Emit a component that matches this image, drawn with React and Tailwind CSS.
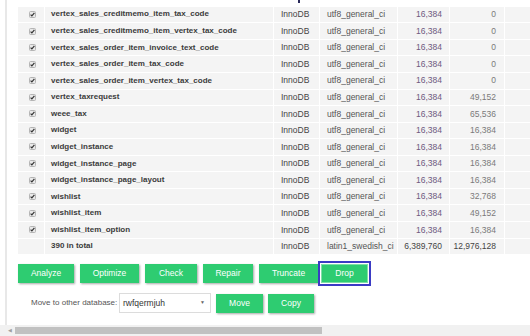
import React from 'react';

const rows = [
  ['vertex_sales_creditmemo_item_tax_code', '16,384', '0'],
  ['vertex_sales_creditmemo_item_vertex_tax_code', '16,384', '0'],
  ['vertex_sales_order_item_invoice_text_code', '16,384', '0'],
  ['vertex_sales_order_item_tax_code', '16,384', '0'],
  ['vertex_sales_order_item_vertex_tax_code', '16,384', '0'],
  ['vertex_taxrequest', '16,384', '49,152'],
  ['weee_tax', '16,384', '65,536'],
  ['widget', '16,384', '16,384'],
  ['widget_instance', '16,384', '16,384'],
  ['widget_instance_page', '16,384', '16,384'],
  ['widget_instance_page_layout', '16,384', '16,384'],
  ['wishlist', '16,384', '32,768'],
  ['wishlist_item', '16,384', '49,152'],
  ['wishlist_item_option', '16,384', '16,384'],
];

const actions = [
  ['Analyze', 'w-[56px]'],
  ['Optimize', 'w-[59px]'],
  ['Check', 'w-[52px]'],
  ['Repair', 'w-[50px]'],
  ['Truncate', 'w-[59px]'],
];

const Checkbox = () => (
  <svg width="7" height="7" viewBox="0 0 7 7">
    <rect x="0.5" y="0.5" width="6" height="6" rx="1" fill="#e9e9e9" stroke="#b5b5b5" />
    <path d="M1.6 3.6 L2.9 4.9 L5.4 1.8" fill="none" stroke="#333" strokeWidth="1.2" />
  </svg>
);

const Row = ({ name, size, overhead, total }) => (
  <div className="flex h-[16.57px] border-b border-white bg-[#f4f4f4] leading-none">
    <div className="w-[27px] border-r border-white flex items-center pl-[11px]">
      {!total && <Checkbox />}
    </div>
    <div className="w-[229px] border-r border-white flex items-center pl-[6px] font-bold text-[8px] text-[#3b3b3b] whitespace-nowrap">
      {name}
    </div>
    <div className="w-[46px] border-r border-white flex items-center pl-[7px] text-[#444]">InnoDB</div>
    <div className="w-[78px] border-r border-white flex items-center pl-[7px] text-[#555] whitespace-nowrap">
      {total ? 'latin1_swedish_ci' : 'utf8_general_ci'}
    </div>
    <div className={`w-[52px] border-r border-white flex items-center justify-end pr-[7px] ${total ? 'text-[#444]' : 'text-[#6e5a80]'}`}>
      {size}
    </div>
    <div className={`w-[55px] border-r border-white flex items-center justify-end pr-[8px] ${total ? 'text-[#444]' : 'text-[#7a7a7a]'}`}>
      {overhead}
    </div>
    <div className="flex-1" />
  </div>
);

const GreenButton = ({ children, className = '' }) => (
  <button className={`h-[19px] bg-[#2ecc71] text-white text-[8.5px] shadow-[1px_1px_2px_rgba(0,0,0,0.35)] flex items-center justify-center ${className}`}>
    {children}
  </button>
);

export default function App() {
  return (
    <div className="w-[530px] h-[336px] overflow-hidden bg-white flex flex-col text-[8.5px]" style={{ fontFamily: '"Liberation Sans", Arial, sans-serif' }}>
      <div className="flex-1 ml-[5px] border-l-2 border-[#e8e8e8] pl-[11px] flex flex-col">
        <div className="h-[6.7px] flex">
          <span className="ml-[280px] w-[2px] h-[3px] bg-[#2a2a5a]" />
        </div>

        {rows.map(([name, size, overhead]) => (
          <Row key={name} name={name} size={size} overhead={overhead} />
        ))}
        <Row name="390 in total" size="6,389,760" overhead="12,976,128" total />

        <div className="flex items-center gap-[6px] mt-[8px]">
          {actions.map(([label, w]) => (
            <GreenButton key={label} className={w}>{label}</GreenButton>
          ))}
          <div className="ml-[-4px] p-px outline-2 outline-[#3b3bc4] outline-offset-0 bg-white">
            <GreenButton className="w-[47px] shadow-none border border-[#7ee0a6]">Drop</GreenButton>
          </div>
        </div>

        <div className="flex items-center mt-[9px] pl-[13px]">
          <span className="text-[8px] text-[#555] w-[88px]">Move to other database:</span>
          <div className="w-[92px] h-[20px] border border-[#dcdcdc] bg-white flex items-center justify-between pl-[3px] pr-[5px] text-[8.5px] text-[#333]">
            <span>rwfqermjuh</span>
            <span className="text-[5px] text-[#666]">▼</span>
          </div>
          <GreenButton className="w-[47px] ml-[5px]">Move</GreenButton>
          <GreenButton className="w-[46px] ml-[5px]">Copy</GreenButton>
        </div>
      </div>

      <div className="h-[11px] bg-[#f1f1f1] flex items-center">
        <span className="ml-[8px] text-[5px] text-[#a0a0a0] leading-none">◀</span>
        <div className="ml-[3px] w-[307px] h-[7px] bg-[#c1c1c1]" />
      </div>
    </div>
  );
}
